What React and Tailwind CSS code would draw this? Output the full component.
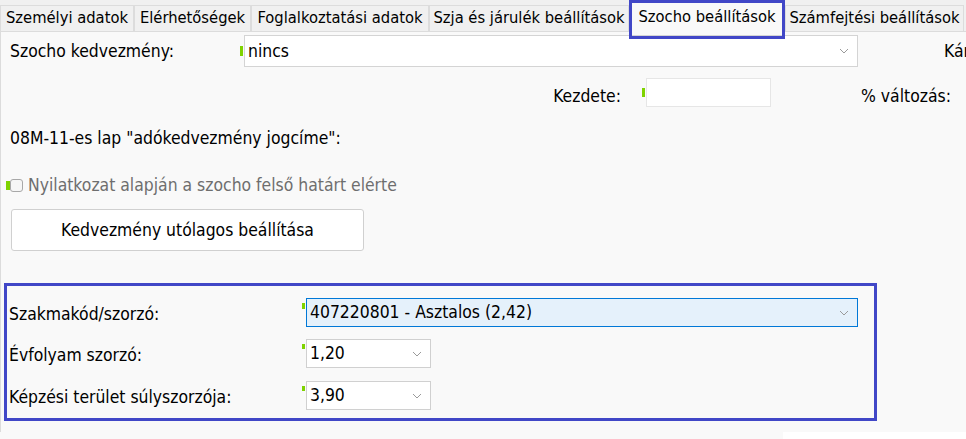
import React from "react";

function Chevron() {
  return (
    <svg width="10" height="6" viewBox="0 0 10 6" className="shrink-0">
      <polyline points="1,1 5,5 9,1" fill="none" stroke="#9a9a9a" strokeWidth="1" />
    </svg>
  );
}

function Tab({ w, children }) {
  return (
    <div className={`${w} h-[26px] shrink-0 border-t border-l border-r border-[#dcdcdc] bg-[#f0f0f0] flex items-center justify-center whitespace-nowrap overflow-hidden`}>
      {children}
    </div>
  );
}

function Marker({ cls }) {
  return <div className={`w-[3px] shrink-0 bg-[#7fd300] mr-[1px] ${cls}`} />;
}

export default function App() {
  return (
    <div className="w-[966px] h-[439px] bg-[#f0f0f0] relative overflow-hidden text-black font-['DejaVu_Sans_Condensed','DejaVu_Sans',sans-serif] [font-stretch:condensed] text-[17.4px]">
      {/* tab bar */}
      <div className="flex items-end h-[31px] text-[16.4px]">
        <Tab w="w-[134px]">Személyi adatok</Tab>
        <Tab w="w-[117px]">Elérhetőségek</Tab>
        <Tab w="w-[178px]">Foglalkoztatási adatok</Tab>
        <Tab w="w-[200px]">Szja és járulék beállítások</Tab>
        <div className="w-[156px] h-[30px] -mb-px shrink-0 relative z-10 bg-[#f9f9f9] border-t border-l border-r border-[#dcdcdc] flex items-start justify-center pt-[2px] whitespace-nowrap">
          Szocho beállítások
        </div>
        <Tab w="w-[179px]">Számfejtési beállítások</Tab>
      </div>

      {/* annotation around selected tab */}
      <div className="absolute left-[629px] top-0 w-[156px] h-[39px] border-[3px] border-[#4147c7] z-20 pointer-events-none" />

      {/* panel */}
      <div className="h-[401px] bg-[#f9f9f9] border-t border-l border-[#dcdcdc] flex flex-col">
        {/* row 1 */}
        <div className="mt-[3px] flex items-start h-[32px] whitespace-nowrap">
          <div className="w-[239px] pl-[9px] leading-[32px] shrink-0">Szocho kedvezmény:</div>
          <Marker cls="mt-[11px] h-[10px]" />
          <div className="w-[614px] h-[32px] shrink-0 bg-white border border-[#d4d4d4] flex items-center justify-between pl-[3px] pr-[8px]">
            <span>nincs</span>
            <Chevron />
          </div>
          <div className="ml-[86px] leading-[32px]">Kártya</div>
        </div>

        {/* row 2 */}
        <div className="mt-[11px] flex items-start h-[29px] whitespace-nowrap">
          <div className="w-[620px] text-right leading-[29px] pt-[4px] shrink-0">Kezdete:</div>
          <div className="w-[21px] shrink-0" />
          <Marker cls="mt-[10px] h-[9px]" />
          <div className="w-[125px] h-[29px] shrink-0 bg-white border border-[#e6e6e6]" />
          <div className="ml-[90px] leading-[29px] pt-[4px]">% változás:</div>
        </div>

        {/* row 3 */}
        <div className="mt-[20px] pl-[9px] leading-[22px] whitespace-nowrap">
          08M-11-es lap "adókedvezmény jogcíme":
        </div>

        {/* row 4 checkbox */}
        <div className="mt-[25px] h-[22px] flex items-center whitespace-nowrap">
          <div className="ml-[5px] w-[4px] h-[9px] bg-[#7fd300] shrink-0" />
          <div className="w-[13px] h-[13px] rounded-[3px] border border-[#a8a8a8] bg-[#f6f6f6] shrink-0" />
          <span className="ml-[5px] text-[#6e6e6e]">Nyilatkozat alapján a szocho felső határt elérte</span>
        </div>

        {/* button */}
        <div className="mt-[13px] ml-[10px] w-[353px] h-[42px] bg-white border border-[#d0d0d0] rounded-[3px] flex items-center justify-center whitespace-nowrap">
          Kedvezmény utólagos beállítása
        </div>

        {/* highlighted group */}
        <div className="mt-[32px] ml-[3px] w-[873px] h-[138px] border-[3px] border-[#4147c7] flex flex-col pt-[12px] whitespace-nowrap">
          <div className="flex items-start h-[29px]">
            <div className="w-[295px] pl-[2px] leading-[29px] pt-[2px] shrink-0">Szakmakód/szorzó:</div>
            <Marker cls="mt-[5px] h-[6px]" />
            <div className="w-[552px] h-[29px] shrink-0 bg-[#e5f1fb] border border-[#0078d7] flex items-center justify-between pl-[3px] pr-[8px]">
              <span>407220801 - Asztalos (2,42)</span>
              <Chevron />
            </div>
          </div>
          <div className="mt-[12px] flex items-start h-[29px]">
            <div className="w-[295px] pl-[2px] leading-[29px] pt-[2px] shrink-0">Évfolyam szorzó:</div>
            <Marker cls="mt-[5px] h-[5px]" />
            <div className="w-[125px] h-[29px] shrink-0 bg-white border border-[#d0d0d0] flex items-center justify-between pl-[3px] pr-[8px]">
              <span>1,20</span>
              <Chevron />
            </div>
          </div>
          <div className="mt-[13px] flex items-start h-[29px]">
            <div className="w-[295px] pl-[2px] leading-[29px] pt-[2px] shrink-0">Képzési terület súlyszorzója:</div>
            <Marker cls="mt-[5px] h-[5px]" />
            <div className="w-[125px] h-[29px] shrink-0 bg-white border border-[#d0d0d0] flex items-center justify-between pl-[3px] pr-[8px]">
              <span>3,90</span>
              <Chevron />
            </div>
          </div>
        </div>
      </div>

      {/* bottom strip */}
      <div className="flex h-[7px]">
        <div className="w-[783px] bg-[#f9f9f9]" />
        <div className="flex-1 bg-white" />
      </div>
    </div>
  );
}
